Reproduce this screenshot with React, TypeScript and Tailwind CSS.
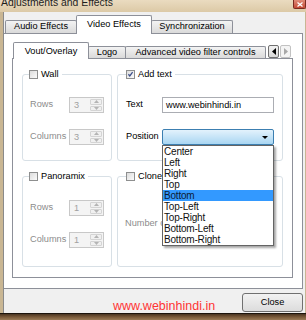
import React from "react";

function Check({ checked }: { checked?: boolean }) {
  return (
    <span className="w-[9px] h-[9px] border border-[#8e8f8f] bg-gradient-to-br from-[#dcdcdc] to-[#fbfbfb] flex items-center justify-center shrink-0">
      {checked && (
        <svg width="9" height="9" viewBox="0 0 9 9">
          <path d="M1.8 4.2 L3.6 6.4 L7.2 1.6" stroke="#3d4f8a" strokeWidth="1.6" fill="none" />
        </svg>
      )}
    </span>
  );
}

function Spin({ value }: { value: string }) {
  return (
    <div className="w-[35px] h-[16px] border border-[#c8c8c8] bg-[#f4f4f4] flex">
      <span className="flex-1 pl-[4px] leading-[14px] text-[#a0a0a0]">{value}</span>
      <div className="w-[13px] flex flex-col gap-px py-px pr-px">
        <div className="flex-1 border border-[#d4d4d4] rounded-[1px] bg-[#f0f0f0] flex items-center justify-center">
          <svg width="5" height="3" viewBox="0 0 5 3"><path d="M0 3 L2.5 0 L5 3 Z" fill="#b4b4b4" /></svg>
        </div>
        <div className="flex-1 border border-[#d4d4d4] rounded-[1px] bg-[#f0f0f0] flex items-center justify-center">
          <svg width="5" height="3" viewBox="0 0 5 3"><path d="M0 0 L2.5 3 L5 0 Z" fill="#b4b4b4" /></svg>
        </div>
      </div>
    </div>
  );
}

const positions = [
  "Center",
  "Left",
  "Right",
  "Top",
  "Bottom",
  "Top-Left",
  "Top-Right",
  "Bottom-Left",
  "Bottom-Right",
];

export default function App() {
  return (
    <div className="w-[306px] h-[320px] overflow-hidden flex flex-col bg-[#c9b693] font-['Liberation_Sans',Arial,sans-serif] text-[9.2px] text-black">
      {/* title bar */}
      <div className="h-[12px] flex items-start justify-between bg-gradient-to-b from-[#eadbc0] to-[#dcc9a6] overflow-hidden">
        <span className="pl-[1px] -mt-[4px] text-[10.4px] leading-[13px] text-[#1e1e1e]">Adjustments and Effects</span>
        <div className="w-[13px] h-[9px] rounded-b-[2px] border border-t-0 border-[#7a2a20] bg-gradient-to-b from-[#e08a78] to-[#c44a36] flex items-center justify-center">
          <svg width="6" height="5" viewBox="0 0 6 5">
            <path d="M0.5 0.5 L5.5 4.5 M5.5 0.5 L0.5 4.5" stroke="#ffffff" strokeWidth="1.3" />
          </svg>
        </div>
      </div>

      {/* client area */}
      <div className="ml-[3px] w-[302px] h-[301px] flex flex-col bg-[#f0f0f0] border-l border-[#8a8a8a]">
        {/* top tabs */}
        <div className="h-[21px] flex items-end pl-[1px]">
          <div className="w-[72px] h-[13px] border border-b-0 border-[#8d9099] rounded-t-[2px] bg-gradient-to-b from-[#f3f3f3] to-[#dadada] flex items-center justify-center">
            Audio Effects
          </div>
          <div className="relative z-10 -ml-px -mb-px w-[76px] h-[19px] border border-b-0 border-[#8d9099] rounded-t-[2px] bg-white flex items-start pt-[2px] justify-center">
            Video Effects
          </div>
          <div className="-ml-px w-[82px] h-[13px] border border-b-0 border-[#8d9099] rounded-t-[2px] bg-gradient-to-b from-[#f3f3f3] to-[#dadada] flex items-center justify-center">
            Synchronization
          </div>
        </div>

        {/* outer pane */}
        <div className="w-[299px] h-[256px] border border-l-0 border-[#8d9099] bg-white flex flex-col pl-[8px]">
          {/* inner tabs */}
          <div className="h-[24px] w-[281px] flex items-end pl-[1px]">
            <div className="relative z-10 -mb-px w-[76px] h-[17px] border border-b-0 border-[#8d9099] rounded-t-[2px] bg-white flex items-start pt-[2px] justify-center">
              Vout/Overlay
            </div>
            <div className="-ml-px w-[38px] h-[12px] border border-b-0 border-[#8d9099] rounded-t-[2px] bg-gradient-to-b from-[#f3f3f3] to-[#dadada] flex items-center justify-center">
              Logo
            </div>
            <div className="-ml-px w-[141px] h-[12px] border border-b-0 border-[#8d9099] rounded-t-[2px] bg-gradient-to-b from-[#f3f3f3] to-[#dadada] flex items-center justify-center">
              Advanced video filter controls
            </div>
            <div className="ml-auto mr-[2px] h-[13px] flex gap-px">
              <div className="w-[11px] border border-[#707070] rounded-[2px] bg-gradient-to-b from-[#f2f2f2] to-[#d8d8d8] flex items-center justify-center">
                <svg width="4" height="7" viewBox="0 0 4 7"><path d="M4 0 L0 3.5 L4 7 Z" fill="#000000" /></svg>
              </div>
              <div className="w-[11px] border border-[#c2c2c2] rounded-[2px] bg-[#f4f4f4] flex items-center justify-center">
                <svg width="4" height="7" viewBox="0 0 4 7"><path d="M0 0 L4 3.5 L0 7 Z" fill="#a8a8a8" /></svg>
              </div>
            </div>
          </div>

          {/* inner pane */}
          <div className="w-[281px] h-[220px] border border-[#8d9099] pl-[9px] pt-[9px]">
            <div className="grid grid-cols-[90px_166px] gap-x-[5px] gap-y-[9px]">
              {/* Wall */}
              <fieldset className="h-[93px] border border-[#d8e0e6] rounded-[3px] px-[7px]">
                <legend className="-ml-px pr-[3px] h-[12px] flex items-center gap-[3px] text-[#000]">
                  <Check />
                  <span className="leading-[12px]">Wall</span>
                </legend>
                <div className="mt-[17px] flex flex-col gap-[16px] text-[#8c8c8c]">
                  <div className="h-[16px] flex items-center">
                    <span className="w-[39px]">Rows</span>
                    <Spin value="3" />
                  </div>
                  <div className="h-[16px] flex items-center">
                    <span className="w-[39px]">Columns</span>
                    <Spin value="3" />
                  </div>
                </div>
              </fieldset>

              {/* Add text */}
              <fieldset className="h-[93px] border border-[#d8e0e6] rounded-[3px] px-[8px]">
                <legend className="pr-[3px] h-[12px] flex items-center gap-[3px]">
                  <Check checked />
                  <span className="leading-[12px]">Add text</span>
                </legend>
                <div className="mt-[17px] flex flex-col gap-[16px]">
                  <div className="h-[16px] flex items-center">
                    <span className="w-[36px]">Text</span>
                    <div className="w-[112px] h-[16px] border border-[#abadb3] bg-white pl-[3px] leading-[14px]">
                      www.webinhindi.in
                    </div>
                  </div>
                  <div className="h-[16px] flex items-center">
                    <span className="w-[36px]">Position</span>
                    <div className="relative w-[112px] h-[16px]">
                      <div className="h-full border border-[#3c7fb1] rounded-[2px] bg-gradient-to-b from-[#e3f2fc] to-[#a9d6f2] flex items-center justify-end pr-[5px]">
                        <svg width="6" height="3" viewBox="0 0 6 3"><path d="M0 0 L6 0 L3 3 Z" fill="#000000" /></svg>
                      </div>
                      <div className="absolute left-0 top-full z-20 w-[112px] border border-[#646464] bg-white shadow-[2px_2px_2px_rgba(0,0,0,0.35)] text-[10px] tracking-[-0.2px] text-[#111]">
                        {positions.map((p) => (
                          <div
                            key={p}
                            className={
                              p === "Bottom"
                                ? "h-[11px] leading-[11px] pl-[1px] bg-[#3399ff] text-[#0d1b33]"
                                : "h-[11px] leading-[11px] pl-[1px]"
                            }
                          >
                            {p}
                          </div>
                        ))}
                      </div>
                    </div>
                  </div>
                </div>
              </fieldset>

              {/* Panoramix */}
              <fieldset className="h-[97px] border border-[#d8e0e6] rounded-[3px] px-[7px]">
                <legend className="-ml-px pr-[3px] h-[12px] flex items-center gap-[3px]">
                  <Check />
                  <span className="leading-[12px]">Panoramix</span>
                </legend>
                <div className="mt-[18px] flex flex-col gap-[16px] text-[#8c8c8c]">
                  <div className="h-[16px] flex items-center">
                    <span className="w-[39px]">Rows</span>
                    <Spin value="1" />
                  </div>
                  <div className="h-[16px] flex items-center">
                    <span className="w-[39px]">Columns</span>
                    <Spin value="1" />
                  </div>
                </div>
              </fieldset>

              {/* Clone */}
              <fieldset className="h-[97px] border border-[#d8e0e6] rounded-[3px] px-[8px]">
                <legend className="pr-[3px] h-[12px] flex items-center gap-[3px]">
                  <Check />
                  <span className="leading-[12px]">Clone</span>
                </legend>
                <div className="mt-[34px] h-[16px] flex items-center -ml-px text-[#8c8c8c]">
                  Number of clones
                </div>
              </fieldset>
            </div>
          </div>
        </div>

        {/* bottom bar */}
        <div className="h-[24px] flex">
          <span className="ml-[109px] self-end leading-[14px] text-[12.5px] text-[#ff3434]">www.webinhindi.in</span>
          <div className="ml-auto mr-[2px] mt-[4px] w-[61px] h-[19px] border border-[#707070] rounded-[3px] bg-gradient-to-b from-[#f2f2f2] to-[#dcdcdc] flex items-center justify-center">
            Close
          </div>
        </div>
      </div>

      {/* bottom frame */}
      <div className="h-[7px] border-t border-[#1c140c] bg-gradient-to-b from-[#4a3522] via-[#7a5a3a] to-[#9a7c58]" />
    </div>
  );
}
